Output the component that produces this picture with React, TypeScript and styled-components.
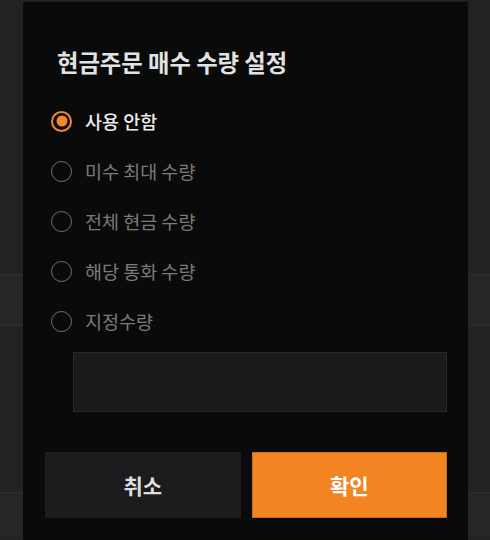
import { useState } from "react";
import styled, { createGlobalStyle } from "styled-components";

const OPTIONS = ["사용 안함", "미수 최대 수량", "전체 현금 수량", "해당 통화 수량", "지정수량"];

const BACK_ROWS: { height: number; tone: "dark" | "light"; line?: boolean }[] = [
  { height: 274, tone: "dark" },
  { height: 51, tone: "light", line: true },
  { height: 167, tone: "dark", line: true },
  { height: 45, tone: "light", line: true },
];

export default function App() {
  const [selected, setSelected] = useState(0);
  const [amount, setAmount] = useState("");

  return (
    <>
      <GlobalStyle />
      <Screen>
        <Backdrop>
          {BACK_ROWS.map((row, i) => (
            <BackRow key={i} $tone={row.tone} $line={row.line} style={{ height: row.height }} />
          ))}
        </Backdrop>

        <Dialog>
          <Title>현금주문 매수 수량 설정</Title>
          <OptionList>
            {OPTIONS.map((label, i) => (
              <Option key={label} onClick={() => setSelected(i)}>
                <Radio $checked={selected === i} />
                <Label $checked={selected === i}>{label}</Label>
              </Option>
            ))}
          </OptionList>
          <AmountInput value={amount} onChange={(e) => setAmount(e.target.value)} />
          <Buttons>
            <Button>취소</Button>
            <Button $primary>확인</Button>
          </Buttons>
        </Dialog>
      </Screen>
    </>
  );
}

const GlobalStyle = createGlobalStyle`
  * {
    box-sizing: border-box;
  }
  body {
    margin: 0;
    background: #222224;
    font-family: "Noto Sans CJK KR", "Noto Sans", sans-serif;
  }
`;

const Screen = styled.div`
  position: relative;
  width: 490px;
  height: 540px;
  overflow: hidden;
`;

const Backdrop = styled.div`
  display: flex;
  flex-direction: column;
`;

const BackRow = styled.div<{ $tone: "dark" | "light"; $line?: boolean }>`
  background: ${({ $tone }) => ($tone === "light" ? "#262628" : "#222224")};
  border-top: ${({ $line }) => ($line ? "1px solid #2e2e30" : "none")};
`;

const Dialog = styled.div`
  position: absolute;
  left: 23px;
  top: 1px;
  width: 445px;
  height: 560px;
  background: #0a0a0a;
  border-top: 1px solid #1c1c1c;
  padding: 46px 21px 0 22px;
  display: flex;
  flex-direction: column;
`;

const Title = styled.h2`
  margin: 0 0 20px 12px;
  font-size: 23.3px;
  line-height: 28px;
  font-weight: 700;
  color: #e2e2e2;
`;

const OptionList = styled.div`
  display: flex;
  flex-direction: column;
  padding-left: 6px;
`;

const Option = styled.label`
  display: flex;
  align-items: center;
  gap: 13px;
  height: 50px;
  cursor: pointer;
`;

const Radio = styled.span<{ $checked: boolean }>`
  position: relative;
  flex: none;
  width: 21px;
  height: 21px;
  border-radius: 50%;
  border: ${({ $checked }) => ($checked ? "2px solid #f08a2c" : "1.5px solid #727272")};

  &::after {
    content: "";
    display: ${({ $checked }) => ($checked ? "block" : "none")};
    position: absolute;
    left: 50%;
    top: 50%;
    width: 11px;
    height: 11px;
    border-radius: 50%;
    background: #f5862a;
    transform: translate(-50%, -50%);
  }
`;

const Label = styled.span<{ $checked: boolean }>`
  font-size: 18.5px;
  line-height: 24px;
  font-weight: ${({ $checked }) => ($checked ? 500 : 400)};
  color: ${({ $checked }) => ($checked ? "#ececec" : "#7a7a7a")};
`;

const AmountInput = styled.input`
  margin: 6px 0 0 28px;
  height: 60px;
  background: #1b1b1b;
  border: 1px solid #2a2a2a;
  color: #e0e0e0;
  font-size: 18px;
  padding: 0 14px;
  outline: none;
`;

const Buttons = styled.div`
  display: grid;
  grid-template-columns: 1fr 1fr;
  gap: 11px;
  margin-top: 40px;
`;

const Button = styled.button<{ $primary?: boolean }>`
  height: 66px;
  border: 1px solid ${({ $primary }) => ($primary ? "#c96a1c" : "#1c1c1e")};
  background: ${({ $primary }) => ($primary ? "#f28422" : "#1c1c1e")};
  color: ${({ $primary }) => ($primary ? "#ffffff" : "#dedede")};
  font-family: inherit;
  font-size: 21px;
  font-weight: 700;
  cursor: pointer;
`;
